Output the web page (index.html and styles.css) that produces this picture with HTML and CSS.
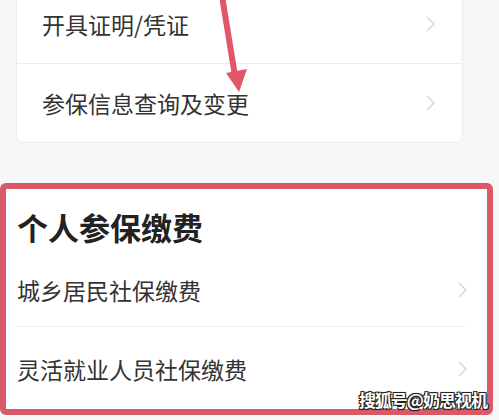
FILE: index.html
```html
<!DOCTYPE html>
<html lang="zh-CN">
<head>
    <meta charset="UTF-8">
    <title>社保服务</title>
    <link rel="stylesheet" href="styles.css">
</head>
<body>
    <div class="page">
        <div class="menu-card">
            <div class="menu-row">
                <span>开具证明/凭证</span>
                <svg class="chevron" width="9" height="16" viewBox="0 0 9 16"><polyline points="1,1 8,8 1,15"/></svg>
            </div>
            <div class="menu-row">
                <span>参保信息查询及变更</span>
                <svg class="chevron" width="9" height="16" viewBox="0 0 9 16"><polyline points="1,1 8,8 1,15"/></svg>
            </div>
        </div>

        <div class="pay-section">
            <h2>个人参保缴费</h2>
            <div class="pay-list">
                <div class="pay-row">
                    <span>城乡居民社保缴费</span>
                    <svg class="chevron" width="9" height="16" viewBox="0 0 9 16"><polyline points="1,1 8,8 1,15"/></svg>
                </div>
                <div class="pay-row">
                    <span>灵活就业人员社保缴费</span>
                    <svg class="chevron" width="9" height="16" viewBox="0 0 9 16"><polyline points="1,1 8,8 1,15"/></svg>
                </div>
            </div>
        </div>

        <!-- red marker arrow drawn over the card -->
        <svg class="arrow" width="40" height="96" viewBox="0 0 40 96">
            <line x1="2" y1="-4" x2="15" y2="76" stroke="#e05866" stroke-width="6"/>
            <polygon points="6,73 27,69 19,92" fill="#e05866"/>
        </svg>

        <div class="watermark">搜狐号@奶思视机</div>
    </div>
</body>
</html>
```

FILE: styles.css
```css
* {
    box-sizing: border-box;
    margin: 0;
    padding: 0;
}

body {
    background-color: #f7f7f7;
    font-family: "Noto Sans CJK SC", "Noto Sans", sans-serif;
    color: #333;
    overflow: hidden;
}

.page {
    position: relative;
    display: flow-root;
    width: 499px;
    height: 420px;
}

.menu-card {
    margin: -17px 36px 0 16px;
    background-color: #fff;
    border: 1px solid #ececec;
    border-radius: 7px;
}

.menu-row {
    display: flex;
    align-items: center;
    justify-content: space-between;
    height: 79px;
    padding: 0 27px 0 25px;
    font-size: 23px;
    color: #333;
}

.menu-row + .menu-row {
    border-top: 1px solid #ececec;
}

.chevron polyline {
    fill: none;
    stroke: #d2d2d2;
    stroke-width: 1.3;
}

.pay-section {
    margin: 40px 6px 0 0;
    height: 232px;
    background-color: #fff;
    border: 6px solid #d95a67;
    border-radius: 6px;
    padding: 18px 0 0 11px;
}

.pay-section h2 {
    font-size: 31px;
    font-weight: bold;
    line-height: 40px;
    color: #222;
}

.pay-list {
    margin: 7px 21px 0 0;
}

.pay-row {
    display: flex;
    align-items: center;
    justify-content: space-between;
    height: 72px;
    font-size: 23px;
    color: #333;
}

.pay-row + .pay-row {
    border-top: 1px solid #eee;
    height: 84px;
}

.pay-row .chevron {
    margin-right: -1px;
}

.arrow {
    position: absolute;
    left: 220px;
    top: 0;
}

.watermark {
    position: absolute;
    right: 12px;
    bottom: 8px;
    font-size: 17px;
    font-weight: bold;
    color: #fff;
    letter-spacing: -1px;
    text-shadow: -1px -1px 0 #222, 1px -1px 0 #222, -1px 1px 0 #222, 1px 1px 0 #222, 0 0 2px #000;
}
```
